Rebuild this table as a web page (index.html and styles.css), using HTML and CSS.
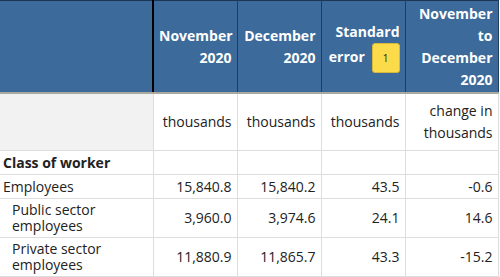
FILE: index.html
```html
<!DOCTYPE html>
<html>
<head>
<meta charset="utf-8">
<link rel="stylesheet" href="styles.css">
</head>
<body>
<table class="data">
  <colgroup>
    <col class="c-stub">
    <col class="c-num">
    <col class="c-num">
    <col class="c-num">
    <col class="c-last">
  </colgroup>
  <thead>
    <tr class="head">
      <th class="stub-head"></th>
      <th>November<br>2020</th>
      <th>December<br>2020</th>
      <th><span class="line">Standard</span><span class="line">error <span class="badge">1</span></span></th>
      <th>November<br>to<br>December<br>2020</th>
    </tr>
  </thead>
  <tbody>
    <tr class="units">
      <td class="stub"></td>
      <td>thousands</td>
      <td>thousands</td>
      <td>thousands</td>
      <td>change in<br>thousands</td>
    </tr>
    <tr class="group">
      <td class="stub">Class of worker</td>
      <td></td><td></td><td></td><td></td>
    </tr>
    <tr class="row">
      <td class="stub">Employees</td>
      <td>15,840.8</td>
      <td>15,840.2</td>
      <td>43.5</td>
      <td>-0.6</td>
    </tr>
    <tr class="row tall">
      <td class="stub sub">Public sector<br>employees</td>
      <td>3,960.0</td>
      <td>3,974.6</td>
      <td>24.1</td>
      <td>14.6</td>
    </tr>
    <tr class="row tall">
      <td class="stub sub">Private sector<br>employees</td>
      <td>11,880.9</td>
      <td>11,865.7</td>
      <td>43.3</td>
      <td>-15.2</td>
    </tr>
  </tbody>
</table>
</body>
</html>
```
FILE: styles.css
```css
body {
  margin: 0;
  font-family: "Open Sans", sans-serif;
  font-size: 14px;
  color: #222;
  background: #fff;
}
.data {
  border-collapse: collapse;
  table-layout: fixed;
  width: 498px;
  border-top: 1px solid #1b3554;
}
.c-stub { width: 153px; }
.c-num { width: 84px; }
.c-last { width: 93px; }

.head th {
  background: #3b6a9b;
  color: #fff;
  font-weight: bold;
  text-align: right;
  vertical-align: middle;
  padding: 0 5px;
  line-height: 22px;
  height: 91px;
  border-left: 1px solid #1f3d60;
  border-right: 1px solid #1f3d60;
  border-bottom: 2px solid #a9a9a0;
}
.head th.stub-head {
  border-left: none;
  border-right: 2px solid #000;
}
.line { display: block; }
.badge {
  display: inline-block;
  vertical-align: middle;
  width: 28px;
  height: 30px;
  line-height: 28px;
  margin-left: 3px;
  background: #fcdb4a;
  border: 1px solid #d8b838;
  border-radius: 3px;
  color: #222;
  font-size: 10px;
  font-weight: normal;
  text-align: center;
  box-sizing: border-box;
}

td {
  border: 1px solid #dddddd;
  text-align: right;
  padding: 0 5px;
  vertical-align: middle;
}
td.stub {
  text-align: left;
  padding-left: 3px;
  border-left: none;
}
.units td {
  height: 56px;
  line-height: 22px;
}
.units td.stub { background: #f2f2f2; }
.group td { height: 23px; }
.group td.stub { font-weight: bold; }
.row td { height: 23px; line-height: 18px; }
.row.tall td { height: 38px; line-height: 16px; }
td.sub { padding-left: 12px; }
```
